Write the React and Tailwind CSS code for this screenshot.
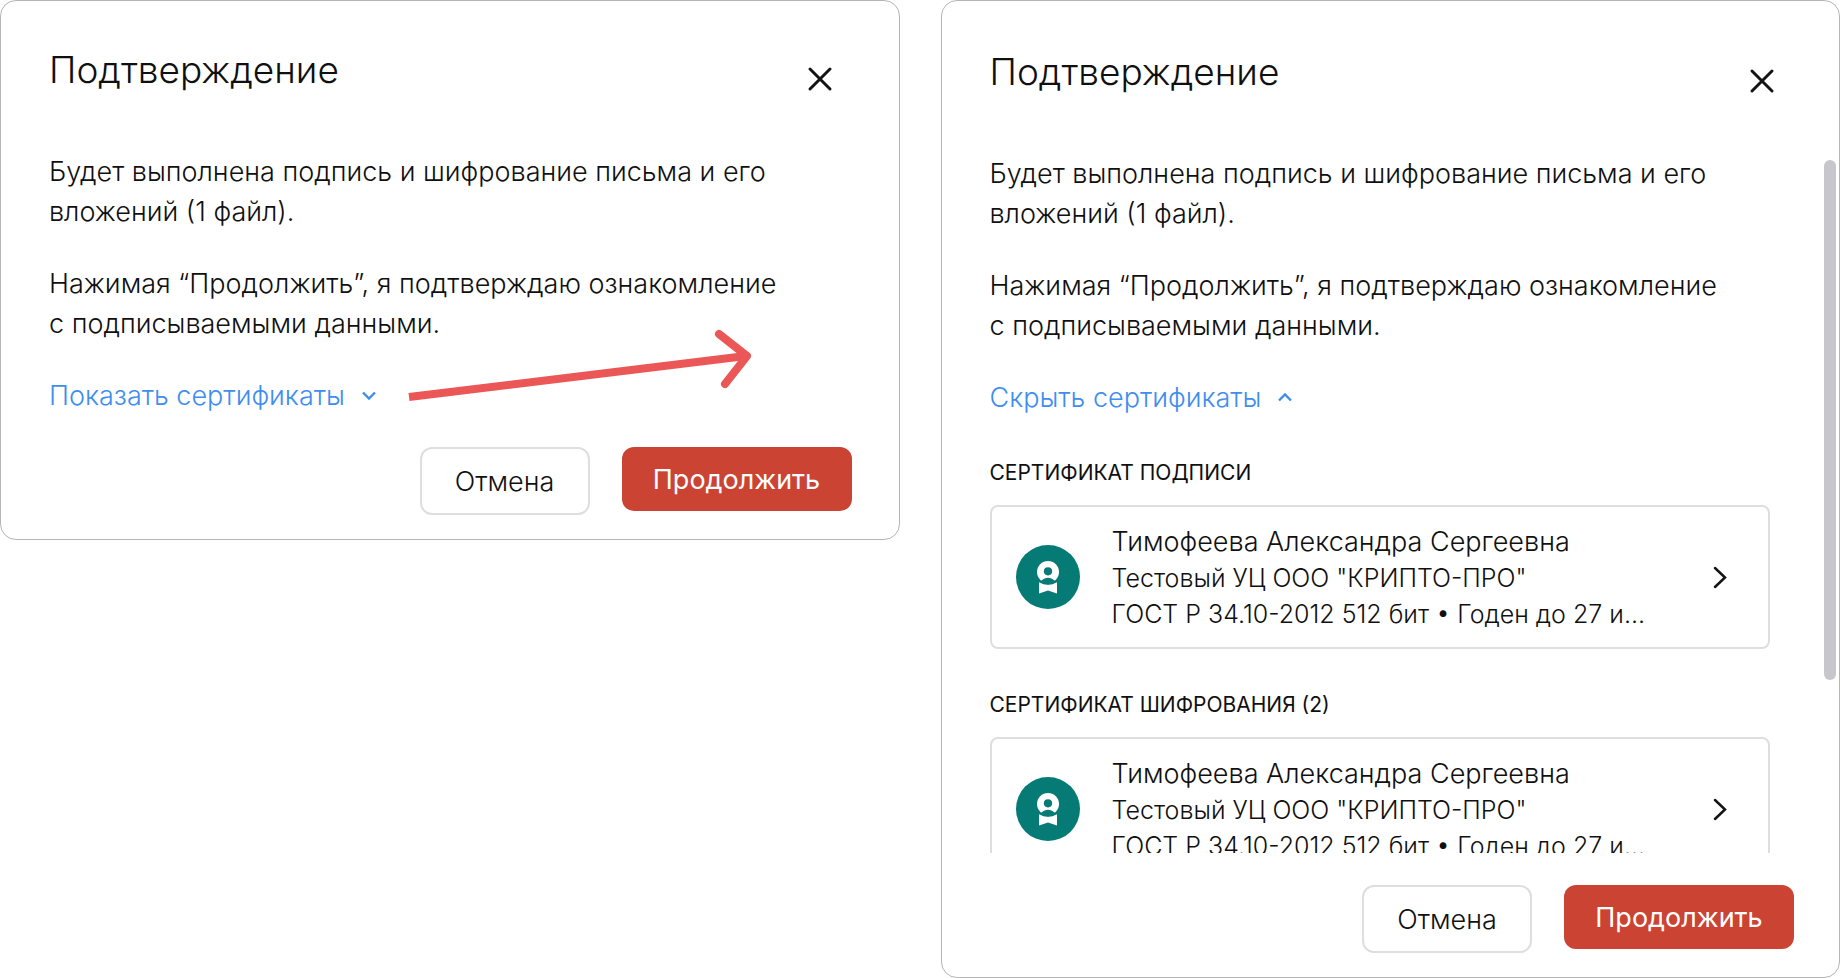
import React, { useState } from "react";

function CloseIcon() {
  return (
    <svg className="size-8" viewBox="0 0 32 32" fill="none" stroke="#141414" strokeWidth="3" strokeLinecap="round" aria-hidden="true">
      <path d="M6 6 L26 26 M26 6 L6 26" />
    </svg>
  );
}

function ToggleIcon({ open }) {
  return (
    <svg className="size-4" viewBox="0 0 16 16" fill="none" stroke="currentColor" strokeWidth="2.4" aria-hidden="true">
      <path d={open ? "M2 10.5 L8 4.5 L14 10.5" : "M2 4.5 L8 10.5 L14 4.5"} />
    </svg>
  );
}

function BadgeIcon() {
  return (
    <svg className="size-16 shrink-0" viewBox="0 0 64 64" aria-hidden="true">
      <circle cx="32" cy="32" r="32" fill="#067b76" />
      <path d="M23 37.2 Q32 42.4 41 37.2 V48.4 L32 45.6 L23 48.4 Z" fill="#fff" />
      <circle cx="32" cy="27" r="11" fill="#fff" />
      <path d="M25.4 35.4 Q28 32.8 32 32.8 Q36 32.8 38.6 35.4 Q40 36.6 38.6 37.6 Q32 41.4 25.4 37.6 Q24 36.6 25.4 35.4 Z" fill="#067b76" />
      <circle cx="32" cy="26.3" r="4.1" fill="#067b76" />
    </svg>
  );
}

function CertificateCard() {
  return (
    <button type="button" className="flex w-full items-center rounded-lg border-2 border-[#dedede] bg-white py-[15px] pr-9 pl-6 text-left">
      <BadgeIcon />
      <span className="ml-8 flex min-w-0 flex-1 flex-col pt-0.5 text-[25px]/9 whitespace-nowrap">
        <span className="text-[27px]/9">Тимофеева Александра Сергеевна</span>
        <span>Тестовый УЦ ООО "КРИПТО-ПРО"</span>
        <span>ГОСТ Р 34.10-2012 512 бит • Годен до 27 и...</span>
      </span>
      <svg className="size-6 shrink-0" viewBox="0 0 24 24" fill="none" stroke="#141414" strokeWidth="2.5" strokeLinecap="round" aria-hidden="true">
        <path d="M7 3 L17 12.5 L7 22" />
      </svg>
    </button>
  );
}

function Message({ open, onToggle }) {
  return (
    <div className="flex flex-col gap-8 text-[27px]/10">
      <p>Будет выполнена подпись и шифрование письма и его вложений (1 файл).</p>
      <p>
        Нажимая “Продолжить”, я подтверждаю ознакомление с&nbsp;подписываемыми данными.
      </p>
      <button type="button" aria-expanded={open} onClick={onToggle} className="flex items-center gap-4 self-start text-[#3e8ef0]">
        {open ? "Скрыть сертификаты" : "Показать сертификаты"}
        <ToggleIcon open={open} />
      </button>
    </div>
  );
}

function Certificates() {
  return (
    <div className="flex flex-col gap-[43px] pt-[43px]">
      <section>
        <h3 className="mb-5 text-[21px]/6 font-normal">СЕРТИФИКАТ ПОДПИСИ</h3>
        <CertificateCard />
      </section>
      <section className="pt-px">
        <h3 className="mb-5 text-[21px]/6 font-normal">СЕРТИФИКАТ ШИФРОВАНИЯ (2)</h3>
        <CertificateCard />
      </section>
    </div>
  );
}

function PointerArrow() {
  return (
    <svg className="pointer-events-none absolute top-[325px] left-[405px] h-[78px] w-[350px]" viewBox="0 0 350 78" fill="none" stroke="#eb5757" strokeWidth="8" strokeLinejoin="round" aria-hidden="true">
      <path d="M3 71 L340 30" />
      <path d="M313 8 L341 30 L319 58" strokeLinecap="round" />
    </svg>
  );
}

function ConfirmDialog({ id, initiallyOpen, className, headerClass, footerClass, children }) {
  const [open, setOpen] = useState(initiallyOpen);
  return (
    <section role="dialog" aria-labelledby={id} className={"relative flex min-w-0 flex-1 flex-col rounded-2xl border border-[#b5b5b5] bg-white " + className}>
      <header className={"flex shrink-0 items-start justify-between pl-12 " + headerClass}>
        <h2 id={id} className="text-[37px]/[44px]">Подтверждение</h2>
        <button type="button" aria-label="Закрыть" className="mt-[15px]">
          <CloseIcon />
        </button>
      </header>
      <div className="flex min-h-0 flex-1 pr-[3px]">
        <div className="min-w-0 flex-1 overflow-hidden pr-[54px] pl-12">
          <Message open={open} onToggle={() => setOpen(!open)} />
          {open && <Certificates />}
        </div>
        <div className="w-3 pt-[6px]">
          {open && <div className="h-3/4 rounded-full bg-[#c7c6cc]" />}
        </div>
      </div>
      <footer className={"flex shrink-0 items-start justify-end gap-8 pb-6 pl-12 text-[27px]/10 " + footerClass}>
        <button type="button" className="min-w-[170px] rounded-xl border-2 border-[#dedede] bg-white px-6 pt-[13px] pb-[11px]">Отмена</button>
        <button type="button" className="min-w-[230px] rounded-xl bg-[#cb4332] px-6 pt-[13px] pb-[11px] font-normal text-white">Продолжить</button>
      </footer>
      {children}
    </section>
  );
}

export default function App() {
  return (
    <main className="flex h-screen items-start gap-[41px] bg-white font-['Inter',sans-serif] font-light text-[#101010] [font-optical-sizing:none]">
      <ConfirmDialog id="confirm-collapsed" initiallyOpen={false} className="" headerClass="pt-[47px] pr-[63px] pb-[57px]" footerClass="pt-[31px] pr-[47px]">
        <PointerArrow />
      </ConfirmDialog>
      <ConfirmDialog id="confirm-expanded" initiallyOpen={true} className="h-full" headerClass="pt-[49px] pr-[61px] pb-[57px]" footerClass="pt-8 pr-[45px]" />
    </main>
  );
}
